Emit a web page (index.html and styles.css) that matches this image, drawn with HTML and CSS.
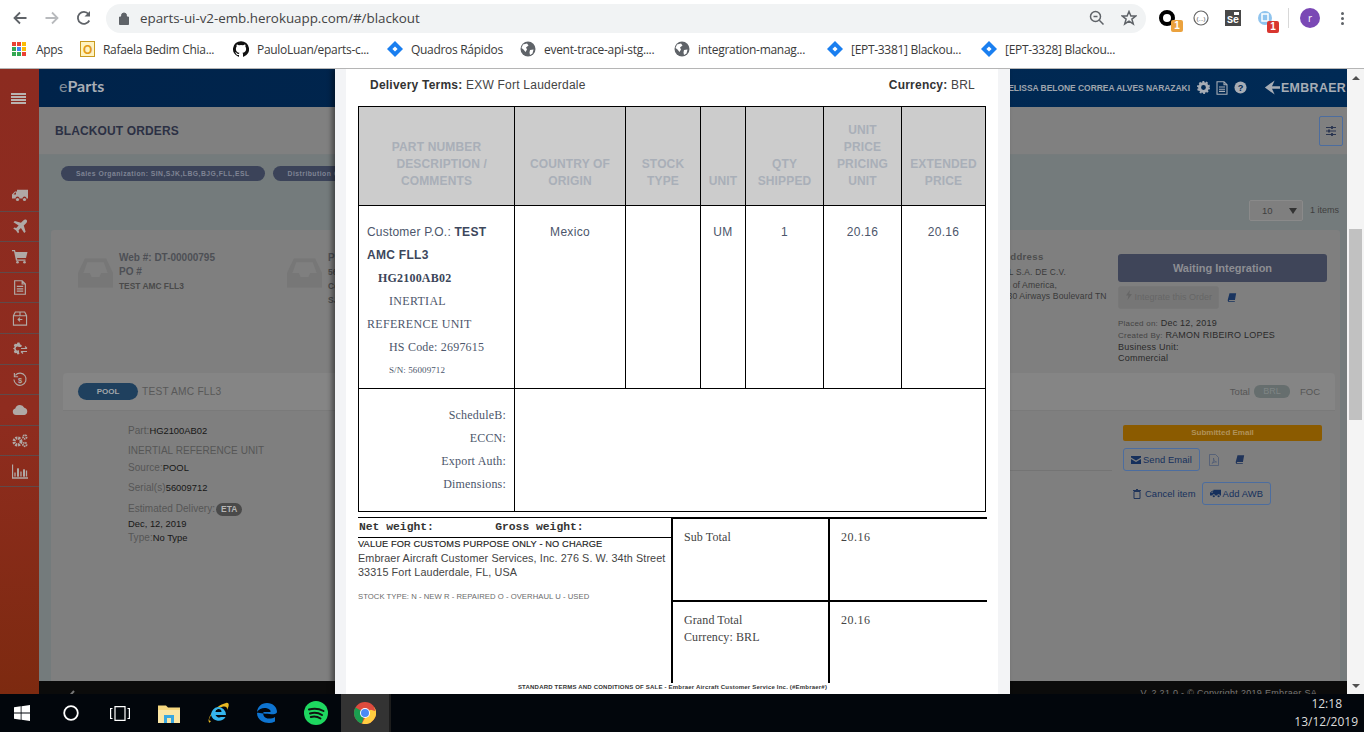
FILE: index.html
```html
<!DOCTYPE html>
<html lang="en">
<head>
<meta charset="utf-8">
<title>eParts - Blackout Orders</title>
<link rel="stylesheet" href="styles.css">
</head>
<body>
<svg class="defs" width="0" height="0" aria-hidden="true">
  <symbol id="jira" viewBox="0 0 16 16"><path d="M8 0 16 8 8 16 0 8Z" fill="#1a7ff0"/><path d="M8 5.4 10.6 8 8 10.6 5.400 8Z" fill="#fff"/></symbol>
  <symbol id="globe" viewBox="0 0 16 16"><circle cx="8" cy="8" r="7.500" fill="#5f6368"/><path d="M3 3.500 7 2.500 8.500 4.500 6 6.500 7 8.500 5.500 11 3.500 8.500 1.500 7ZM10 9 13.500 8.500 12.500 12.500 10 14 9.500 11.500Z" fill="#fff"/></symbol>
  <symbol id="book" viewBox="0 0 12 12"><path d="M3 1H11L9.500 9H2.800C2.200 9 2 10.500 2.800 10.500H9.500L9.300 11.500H2.500C1 11.500.7 10 1 8.500Z" fill="currentColor"/></symbol>
  <symbol id="doc" viewBox="0 0 12 14"><path d="M1 .7H8L11 3.700V13.300H1Z M8 .7V3.700H11 M3 6H9M3 8.200H9M3 10.400H9" fill="none" stroke="currentColor" stroke-width="1.100"/></symbol>
  <symbol id="truck" viewBox="0 0 16 12"><path d="M5 0H16V9H14.500A2 2 0 0 0 10.500 9H7.500A2 2 0 0 0 3.500 9H0V5L3 2H5ZM1.500 5H4V3H3.200Z" fill="currentColor" fill-rule="evenodd"/><circle cx="5.500" cy="10" r="1.600" fill="currentColor"/><circle cx="12.500" cy="10" r="1.600" fill="currentColor"/></symbol>
  <symbol id="inbox" viewBox="0 0 36 30"><path d="M7 0H29L36 15V30H0V15ZM9.500 4 5.500 15H12L14 19H22L24 15H30.500L26.500 4Z" fill="currentColor" fill-rule="evenodd"/></symbol>
</svg>

<header class="chrome">
  <div class="toolbar">
    <div class="nav">
      <svg class="ic16" viewBox="0 0 16 16"><path d="M14.500 8H2.500M8 2.500 2.500 8 8 13.500" fill="none" stroke="#5f6368" stroke-width="1.800"/></svg>
      <svg class="ic16" viewBox="0 0 16 16"><path d="M1.500 8H13.500M8 2.500 13.500 8 8 13.500" fill="none" stroke="#b8babd" stroke-width="1.800"/></svg>
      <svg class="ic16" viewBox="0 0 16 16"><path d="M13.300 10.500A6 6 0 1 1 12.500 4" fill="none" stroke="#5f6368" stroke-width="1.800"/><path d="M14 1V6.500H8.500Z" fill="#5f6368"/></svg>
    </div>
    <div class="omnibox">
      <svg class="lock" viewBox="0 0 10 13"><path d="M2.500 5V3.500a2.500 2.500 0 0 1 5 0V5M0.500 5H9.500V12.500H.5Z" fill="#5f6368" stroke="#5f6368"/></svg>
      <span class="url">eparts-ui-v2-emb.herokuapp.com/#/blackout</span>
      <svg class="omni-a ic16" viewBox="0 0 16 16"><circle cx="6.500" cy="6.500" r="5" fill="none" stroke="#5f6368" stroke-width="1.500"/><path d="M4.500 6.500H8.500M10.300 10.300 14.500 14.500" stroke="#5f6368" stroke-width="1.500"/></svg>
      <svg class="omni-b ic16" viewBox="0 0 16 16"><path d="M8 1.500 9.900 6H14.800L10.900 9.100 12.300 14 8 11.200 3.700 14 5.100 9.100 1.200 6H6.100Z" fill="none" stroke="#5f6368" stroke-width="1.500"/></svg>
    </div>
    <div class="exts">
      <span class="ext"><svg class="ic16" viewBox="0 0 16 16"><circle cx="8" cy="8" r="6" fill="none" stroke="#000" stroke-width="4"/></svg><b class="badge orange">1</b></span>
      <span class="ext"><svg class="ic16" viewBox="0 0 16 16"><circle cx="8" cy="8" r="7" fill="none" stroke="#666" stroke-width="1.200"/><text x="8" y="10.500" class="ext-t">(...)</text></svg></span>
      <span class="se"><i class="se-dot"></i>Se</span>
      <span class="ext"><svg class="ic16" viewBox="0 0 16 16"><circle cx="8" cy="8" r="7" fill="#8fc4ee"/><path d="M5 4H11V11H5Z" fill="none" stroke="#fff" stroke-width="1.500"/></svg><b class="badge red">1</b></span>
      <i class="divider"></i>
      <span class="avatar">r</span>
      <span class="dots"><i></i><i></i><i></i></span>
    </div>
  </div>
  <nav class="bookmarks">
    <span class="bm bm-apps"><span class="apps-grid"><i class="c1"></i><i class="c2"></i><i class="c3"></i><i class="c4"></i><i class="c5"></i><i class="c6"></i><i class="c7"></i><i class="c8"></i><i class="c9"></i></span>Apps</span>
    <span class="bm bm-rafaela"><svg class="ic15" viewBox="0 0 15 16"><rect x=".5" y=".5" width="14" height="15" fill="#fff3c0" stroke="#c99a1e"/><text x="7.500" y="12.500" class="outlook-t">O</text></svg>Rafaela Bedim Chia...</span>
    <span class="bm bm-gh"><svg class="ic16" viewBox="0 0 16 16"><path d="M8 .2a8 8 0 0 0-2.500 15.600c.4.100.5-.2.500-.4v-1.400c-2.200.5-2.700-1-2.700-1-.4-.9-.9-1.200-.9-1.200-.7-.5.100-.5.100-.5.800.100 1.200.8 1.200.8.700 1.200 1.900.9 2.300.7.100-.5.300-.9.500-1.100-1.800-.2-3.600-.9-3.600-4 0-.9.300-1.600.8-2.100-.1-.2-.4-1 .1-2.100 0 0 .7-.2 2.200.8a7.600 7.600 0 0 1 4 0c1.500-1 2.200-.8 2.200-.8.500 1.100.2 1.900.1 2.100.5.600.8 1.300.8 2.100 0 3.100-1.900 3.800-3.700 4 .3.300.6.800.6 1.500v2.200c0 .2.100.5.600.4A8 8 0 0 0 8 .2Z" fill="#111"/></svg>PauloLuan/eparts-c...</span>
    <span class="bm bm-q"><svg class="ic16"><use href="#jira"/></svg>Quadros Rápidos</span>
    <span class="bm bm-e"><svg class="ic16"><use href="#globe"/></svg>event-trace-api-stg....</span>
    <span class="bm bm-i"><svg class="ic16"><use href="#globe"/></svg>integration-manag...</span>
    <span class="bm bm-j1"><svg class="ic16"><use href="#jira"/></svg>[EPT-3381] Blackou...</span>
    <span class="bm"><svg class="ic16"><use href="#jira"/></svg>[EPT-3328] Blackou...</span>
  </nav>
</header>

<div class="viewport">
  <aside class="sidebar">
    <div class="burger"><i></i><i></i><i></i><i></i></div>
    <ul class="side-menu">
      <li><svg class="si" viewBox="0 0 16 12"><use href="#truck"/></svg></li>
      <li><svg class="si" viewBox="0 0 16 16"><path d="M15 1C14 0 12.500.5 11.500 1.500L9 4 2.500 2 1 3.500 6.500 7 4 9.500 2 9 .8 10.200 3.800 12.200 5.800 15.200 7 14 6.500 12 9 9.500 12.500 15 14 13.500 12 7 14.500 4.500C15.500 3.500 16 2 15 1Z" fill="currentColor"/></svg></li>
      <li><svg class="si" viewBox="0 0 16 14"><path d="M0 .5H3L3.500 2.500H15.500L14 8.500H5L5.300 10H13.500V11.300H4L2 1.800H0Z" fill="currentColor"/><circle cx="5.500" cy="12.700" r="1.300" fill="currentColor"/><circle cx="12.500" cy="12.700" r="1.300" fill="currentColor"/></svg></li>
      <li><svg class="si si-doc" viewBox="0 0 12 14"><use href="#doc"/></svg></li>
      <li><svg class="si" viewBox="0 0 16 16"><path d="M3 1H13L15 5V15H1V5ZM1 5H15M8 1V5M10.500 9H6M8 7 6 9 8 11" fill="none" stroke="currentColor" stroke-width="1.200"/></svg></li>
      <li><svg class="si" viewBox="0 0 16 14"><path d="M5.500 1 7.500 1 8 2.800 9.800 3.800 9.300 5.500H7A2 2 0 1 0 7 8.500V10.800L7.500 12.500 5.500 13 4.800 11.500 2.800 11.700 1.800 10 2.800 8.500 1 7 2.800 5.500 1.800 4 2.800 2.300 4.800 2.500Z" fill="currentColor"/><path d="M9 7H15M13 5 15 7M15 10H9M11 12 9 10" fill="none" stroke="currentColor" stroke-width="1.200"/></svg></li>
      <li><svg class="si" viewBox="0 0 16 16"><path d="M3 3.500A6.500 6.500 0 1 1 1.500 8" fill="none" stroke="currentColor" stroke-width="1.200"/><path d="M2 1V5H6" fill="none" stroke="currentColor" stroke-width="1.200"/><text x="8" y="11.500" class="dollar-t">$</text></svg></li>
      <li><svg class="si" viewBox="0 0 16 11"><path d="M4 11A3.300 3.300 0 0 1 3.300 4.500 4.800 4.800 0 0 1 12.300 3.800 3.700 3.700 0 0 1 12.500 11Z" fill="currentColor"/></svg></li>
      <li><svg class="si" viewBox="0 0 16 14"><circle cx="5.500" cy="8" r="3.500" fill="none" stroke="currentColor" stroke-width="3" stroke-dasharray="2 .8"/><circle cx="12.800" cy="3.500" r="1.800" fill="none" stroke="currentColor" stroke-width="1.800" stroke-dasharray="1.400 .6"/><circle cx="12.800" cy="11" r="1.800" fill="none" stroke="currentColor" stroke-width="1.800" stroke-dasharray="1.400 .6"/></svg></li>
      <li><svg class="si" viewBox="0 0 16 14"><path d="M.5 0V13.500H16M3 8V12M6 4V12M9 7V12M12 5V12M14.500 6V12" fill="none" stroke="currentColor" stroke-width="1.300"/><path d="M6 4V12M12 5V12" stroke="currentColor" stroke-width="2"/></svg></li>
    </ul>
  </aside>

  <main class="app">
    <div class="app-header">
      <span class="logo"><span class="logo-e">e</span>Parts</span>
      <div class="user">
        <span class="user-name">MELISSA BELONE CORREA ALVES NARAZAKI</span>
        <svg class="hi" viewBox="0 0 14 14"><circle cx="7" cy="7" r="4.200" fill="none" stroke="#a7adb5" stroke-width="3.200"/><circle cx="7" cy="7" r="6" fill="none" stroke="#a7adb5" stroke-width="2" stroke-dasharray="2 1.770"/></svg>
        <svg class="hi hi-doc" viewBox="0 0 12 14"><use href="#doc"/></svg>
        <svg class="hi" viewBox="0 0 14 14"><circle cx="7" cy="7" r="6.500" fill="#a7adb5"/><text x="7" y="10.500" class="q-t">?</text></svg>
        <svg class="emb-arrow" viewBox="0 0 18 16"><path d="M12 0 1 8 12 16 9 9.500H18V6.500H9Z" fill="#a7adb5"/></svg>
        <span class="emb">EMBRAER</span>
      </div>
    </div>
    <div class="title-bar">
      <h1>BLACKOUT ORDERS</h1>
      <button class="filter-btn"><svg viewBox="0 0 12 12" width="12" height="12"><path d="M1 2.500H11M1 6H11M1 9.500H11" stroke="#2a3550" stroke-width="1.100"/><path d="M7 1V4M4 4.500V7.500M7 8V11" stroke="#2a3550" stroke-width="1.800"/></svg></button>
    </div>
    <div class="chips">
      <span class="chip">Sales Organization: SIN,SJK,LBG,BJG,FLL,ESL</span>
      <span class="chip">Distribution Channel: 10,20</span>
    </div>
    <div class="pager">
      <span class="select">10<i class="caret"></i></span>
      <span class="items">1 items</span>
    </div>
    <section class="card">
      <div class="order-top">
        <div class="order-col">
          <svg class="inbox"><use href="#inbox"/></svg>
          <div>
            <p class="o-h">Web #: DT-00000795</p>
            <p class="o-h">PO #</p>
            <p class="o-s">TEST AMC FLL3</p>
          </div>
        </div>
        <div class="order-col">
          <svg class="inbox"><use href="#inbox"/></svg>
          <div>
            <p class="o-h">Parts</p>
            <p class="o-s">56009712</p>
            <p class="o-s">Commercial</p>
            <p class="o-s">SJK</p>
          </div>
        </div>
        <div class="address">
          <p class="addr-h">Shipping Address</p>
          <p class="addr-a">AEROLITORAL S.A. DE C.V.</p>
          <p class="addr-b">United States of America,</p>
          <p class="addr-b">Memphis, 2630 Airways Boulevard TN</p>
        </div>
        <div class="status">
          <div class="waiting">Waiting Integration</div>
          <div class="status-actions">
            <span class="integrate">
              <svg viewBox="0 0 6 10" width="6" height="10"><path d="M4 0 0 5.500H2.500L1.500 10 6 4H3.300Z" fill="#666"/></svg>
              Integrate this Order
            </span>
            <svg class="book"><use href="#book"/></svg>
          </div>
          <p class="meta"><span class="meta-l">Placed on:</span> Dec 12, 2019</p>
          <p class="meta"><span class="meta-l">Created By:</span> RAMON RIBEIRO LOPES</p>
          <p class="meta">Business Unit:</p>
          <p class="meta">Commercial</p>
        </div>
      </div>
      <div class="item-head">
        <span class="pool">POOL</span>
        <span class="item-ref">TEST AMC FLL3</span>
        <span class="totals">Total <span class="brl">BRL</span> <span class="foc">FOC</span></span>
      </div>
      <div class="item-body">
        <dl class="item-info">
          <div class="l1"><span>Part:</span><b>HG2100AB02</b></div>
          <div class="l2"><span>INERTIAL REFERENCE UNIT</span></div>
          <div class="l3"><span>Source:</span><b>POOL</b></div>
          <div class="l4"><span>Serial(s)</span><b>56009712</b></div>
          <div class="l5"><span>Estimated Delivery:</span><em class="eta">ETA</em></div>
          <div class="l6"><b>Dec, 12, 2019</b></div>
          <div class="l7"><span>Type:</span><b>No Type</b></div>
        </dl>
        <div class="item-rule"></div>
        <div class="item-actions">
          <div class="submitted">Submitted Email</div>
          <div class="act-row">
            <span class="btn"><svg viewBox="0 0 10 8" width="10" height="8"><path d="M0 0H10V1.500L5 4.500 0 1.500ZM0 3 5 6 10 3V8H0Z" fill="#16305c"/></svg> Send Email</span>
            <svg class="pdf" viewBox="0 0 10 12"><path d="M.5.500H6.500L9.500 3.500V11.500H.5ZM3 9.500C4.500 8 5 5.500 4.500 4 4 5.500 6 8 7.500 8 6 7.500 4 8.500 3 9.500Z" fill="none" stroke="#4d5a76" stroke-width=".8"/></svg>
            <svg class="book book2"><use href="#book"/></svg>
          </div>
          <div class="act-row act-row2">
            <span class="cancel"><svg viewBox="0 0 8 10" width="8" height="10"><path d="M1 2.500H7V9.500H1ZM0 1.500H8M3 .5H5" fill="none" stroke="#20355a"/></svg> Cancel item</span>
            <span class="btn btn-awb"><svg viewBox="0 0 16 12" width="11" height="9"><use href="#truck"/></svg> Add AWB</span>
          </div>
        </div>
      </div>
    </section>
    <footer class="app-foot">
      <svg class="foot-chev" viewBox="0 0 12 12" width="12" height="12"><path d="M2 12 10 3" stroke="#777" stroke-width="2"/></svg>
      <span class="foot-txt">V. 2.21.0 - © Copyright 2019 Embraer SA</span>
    </footer>
  </main>

  <div class="scrollbar">
    <i class="arrow-up"></i>
    <i class="thumb"></i>
    <i class="arrow-down"></i>
  </div>

  <div class="modal">
    <div class="sheet">
      <div class="terms">
        <span><b>Delivery Terms:</b> EXW Fort Lauderdale</span>
        <span><b>Currency:</b> BRL</span>
      </div>
      <table class="inv">
        <colgroup><col class="c-a"><col class="c-b"><col class="c-c"><col class="c-d"><col class="c-e"><col class="c-f"><col class="c-g"></colgroup>
        <thead>
          <tr>
            <th>PART NUMBER<br>&nbsp;&nbsp;&nbsp;DESCRIPTION /<br>COMMENTS</th>
            <th>COUNTRY OF<br>ORIGIN</th>
            <th>STOCK<br>TYPE</th>
            <th>UNIT</th>
            <th>QTY<br>SHIPPED</th>
            <th>UNIT<br>PRICE<br>PRICING<br>UNIT</th>
            <th>EXTENDED<br>PRICE</th>
          </tr>
        </thead>
        <tbody>
          <tr class="row-main">
            <td class="desc">
              <div class="d-sans">Customer P.O.: <b>TEST AMC FLL3</b></div>
              <div class="d-serif d-part"><b>HG2100AB02</b></div>
              <div class="d-serif d-wrap">INERTIAL REFERENCE UNIT</div>
              <div class="d-serif d-ind">HS Code: 2697615</div>
              <div class="d-serif d-ind d-sn">S/N: 56009712</div>
            </td>
            <td>Mexico</td>
            <td></td>
            <td>UM</td>
            <td>1</td>
            <td>20.16</td>
            <td>20.16</td>
          </tr>
          <tr class="row-extra">
            <td class="export">ScheduleB:<br>ECCN:<br>Export Auth:<br>Dimensions:</td>
            <td colspan="6"></td>
          </tr>
        </tbody>
      </table>
      <div class="summary">
        <div class="sum-left">
          <div class="weights">Net weight:         Gross weight:</div>
          <p class="value">VALUE FOR CUSTOMS PURPOSE ONLY - NO CHARGE</p>
          <p class="addr">Embraer Aircraft Customer Services, Inc. 276 S. W. 34th Street 33315 Fort Lauderdale, FL, USA</p>
          <p class="stock">STOCK TYPE: N - NEW R - REPAIRED O - OVERHAUL U - USED</p>
        </div>
        <div class="sum-right">
          <div class="s-cell">Sub Total</div><div class="s-cell s-val">20.16</div>
          <div class="s-cell">Grand Total<br>Currency: BRL</div><div class="s-cell s-val">20.16</div>
        </div>
      </div>
      <p class="standard">STANDARD TERMS AND CONDITIONS OF SALE - Embraer Aircraft Customer Service Inc. (#Embraer#)</p>
    </div>
  </div>
</div>

<footer class="taskbar">
  <span class="tb tb-win"><svg viewBox="0 0 16 16" width="16" height="16"><path d="M0 2.300 6.700 1.300V7.600H0ZM7.500 1.200 16 0V7.600H7.500ZM0 8.400H6.700V14.700L0 13.700ZM7.500 8.400H16V16L7.500 14.800Z" fill="#fff"/></svg></span>
  <span class="tb"><svg viewBox="0 0 16 16" width="16" height="16"><circle cx="8" cy="8" r="6.800" fill="none" stroke="#fff" stroke-width="1.800"/></svg></span>
  <span class="tb"><svg viewBox="0 0 20 15" width="20" height="15"><path d="M5 .7H15V14.300H5ZM2.500 2.500H.6V12.500H2.500M17.500 2.500H19.400V12.500H17.500" fill="none" stroke="#fff" stroke-width="1.200"/></svg></span>
  <span class="tb"><svg viewBox="0 0 22 19" width="22" height="19"><path d="M0 1.500H8L10 3.500H22V19H0Z" fill="#f6d77f"/><path d="M0 6H22V19H0Z" fill="#fbe6a6"/><path d="M6 19V11H16V19H13V14H9V19Z" fill="#3aa7e0"/></svg></span>
  <span class="tb"><svg viewBox="0 0 24 24" width="24" height="24"><path d="M3 21C1 18 8 5 20 2 24 1 23 6 21 9 22 3 13 5 6 13 3 17 2 20 5 20 3 23 3 21 3 21Z" fill="#e8b923"/><path d="M12 6A8 8 0 0 0 5 14 8 8 0 0 0 19.500 16H15A4 4 0 0 1 9.500 14H20A8 8 0 0 0 12 6ZM9.500 11A3 3 0 0 1 15.500 11Z" fill="#34b5ee" fill-rule="evenodd"/></svg></span>
  <span class="tb"><svg viewBox="0 0 20 20" width="20" height="20"><path d="M10 0C4 0 .5 4 0 9 2 5.500 6 4.500 9 5 12.500 5.500 14 7.500 13.500 9H6.500C5.500 13 8 15.500 12 15.500 14.500 15.500 16.500 15 18 14V18.500C16 19.500 14 20 12 20 7 20 0 17 0 10 0 9 20 14 20 9 20 4 16 0 10 0Z" fill="#0e74d1"/></svg></span>
  <span class="tb"><svg viewBox="0 0 24 24" width="24" height="24"><circle cx="12" cy="12" r="12" fill="#1ed760"/><path d="M5 8.500C10 7 15 7.500 19.500 10M6 12.500C10 11.300 14.500 11.800 18 14M6.800 16C10 15.200 13.500 15.500 16.500 17.500" fill="none" stroke="#111" stroke-width="2" stroke-linecap="round"/></svg></span>
  <span class="tb tb-active"><svg viewBox="0 0 22 22" width="22" height="22"><circle cx="11" cy="11" r="11" fill="#dd4b3e"/><path d="M11 11 1.500 5.500A11 11 0 0 0 8 21.600Z" fill="#1a9e50"/><path d="M11 11 20.500 5.500A11 11 0 0 1 8 21.600L11 16Z" fill="#ffcd40"/><path d="M11 6H20.500A11 11 0 0 1 21 9Z" fill="#dd4b3e"/><circle cx="11" cy="11" r="5" fill="#fff"/><circle cx="11" cy="11" r="4" fill="#4a8af5"/></svg></span>
  <i class="tb-sep"></i>
  <div class="clock"><span>12:18</span><span>13/12/2019</span></div>
</footer>
</body>
</html>
```
FILE: styles.css
```css
* { box-sizing: border-box; }
html, body { margin: 0; padding: 0; }
body {
  width: 1364px; height: 732px; overflow: hidden;
  display: flex; flex-direction: column;
  font-family: "Liberation Sans", Arial, sans-serif;
  background: #fff;
}
p, h1, ul, dl { margin: 0; padding: 0; }
.defs { position: absolute; }
.ic16 { width: 16px; height: 16px; flex: none; }
.ic15 { width: 15px; height: 16px; flex: none; }

/* browser chrome */
.chrome { height: 69px; flex: none; background: #fff; border-bottom: 1px solid #b5b5b5; }
.toolbar { height: 36px; display: flex; align-items: center; }
.nav { width: 106px; display: flex; gap: 16px; padding-left: 12px; }
.omnibox {
  width: 1040px; height: 29px; border-radius: 15px; background: #f1f3f4;
  display: flex; align-items: center; padding-left: 13px;
}
.lock { width: 10px; height: 13px; margin-right: 11px; }
.url { font-family: "Open Sans", sans-serif; font-size: 13.4px; color: #444; letter-spacing: -.03px; flex: 1; }
.omni-a { margin-right: 16px; }
.omni-b { margin-right: 9px; }
.exts { display: flex; align-items: center; flex: 1; padding-left: 13px; }
.ext { position: relative; width: 34px; display: flex; align-items: center; height: 20px; }
.ext-t { font: 6px "Liberation Sans"; text-anchor: middle; fill: #444; }
.badge {
  position: absolute; left: 12px; top: 12px; min-width: 12px; height: 12px;
  font: bold 10px/12px "Liberation Sans"; color: #fff; text-align: center; border-radius: 2px;
}
.orange { background: #eba23e; }
.red { background: #d8362f; left: 10px; top: 13px; }
.se {
  position: relative; display: block; flex: none;
  font: bold 10px/11px "Liberation Mono", monospace; color: #fff; background: #484848;
  width: 16px; height: 16px; margin: 0 16px 0 -2px; padding: 5px 0 0 2px;
}
.se-dot { position: absolute; top: 2px; right: 2px; width: 5px; height: 3px; background: #fff; }
.divider { width: 1px; height: 20px; background: #d8d8d8; margin: 0 11px 0 -3px; flex: none; }
.avatar {
  width: 20px; height: 20px; border-radius: 50%; background: #7a48b5; color: #fff;
  font: 10px/20px "Open Sans", sans-serif; text-align: center; margin-right: 21px; flex: none;
}
.dots { display: flex; flex-direction: column; gap: 2px; }
.dots i { width: 3px; height: 3px; border-radius: 50%; background: #5f6368; display: block; }

.bookmarks { height: 32px; display: flex; align-items: center; padding: 0 0 6px 12px; }
.bm {
  display: flex; align-items: center; gap: 8px; font: 12px "Open Sans", sans-serif; color: #3a3a3a;
  letter-spacing: -.3px; white-space: nowrap; height: 17px;
}
.bm-apps { width: 68px; gap: 10px; }
.bm-rafaela { width: 153px; }
.bm-gh { width: 154px; }
.bm-q { width: 133px; }
.bm-e { width: 154px; }
.bm-i { width: 153px; }
.bm-j1 { width: 154px; }
.apps-grid { display: grid; grid-template-columns: repeat(3, 4px); gap: 1px; }
.apps-grid i { width: 4px; height: 4px; display: block; }
.c1 { background: #ea4335; } .c2 { background: #ea4335; } .c3 { background: #fbbc05; }
.c4 { background: #34a853; } .c5 { background: #4285f4; } .c6 { background: #fbbc05; }
.c7 { background: #34a853; } .c8 { background: #34a853; } .c9 { background: #ea4335; }
.outlook-t { font: bold 12px "Liberation Sans"; text-anchor: middle; fill: #e39a16; }

/* page */
.viewport { position: relative; flex: 1; display: flex; min-height: 0; overflow: hidden; }
.sidebar {
  width: 39px; flex: none;
  background: linear-gradient(#8c2b20, #8f2c1f 55%, #7d2a10);
}
.burger { height: 112px; padding: 24px 0 0 11px; display: flex; flex-direction: column; gap: 1px; }
.burger i { width: 15px; height: 2px; background: #b9b3b0; display: block; }
.side-menu { list-style: none; color: #b0a9a6; }
.side-menu li {
  height: 30.6px; display: flex; align-items: center; justify-content: center;
  border-bottom: 1px solid #5f4a4a;
}
.si { width: 16px; height: 15px; }
.si-doc { height: 15px; }
.dollar-t { font: bold 8px "Liberation Sans"; text-anchor: middle; fill: currentColor; }

.app { flex: 1; min-width: 0; display: flex; flex-direction: column; background: #747b7c; overflow: hidden; }
.app-header {
  height: 38px; flex: none; display: flex; align-items: center; justify-content: space-between;
  background: linear-gradient(90deg, #00234a, #002a55); padding: 0 0 1px 20px; overflow: hidden;
}
.logo { font: bold 16px/20px "Lato", sans-serif; color: #a8adb5; margin-top: -3px; }
.logo-e { color: #7f8b98; font-weight: 400; }
.user { display: flex; align-items: center; width: 400px; flex: none; margin-right: -55px; }
.user-name { font: bold 8.5px "Liberation Sans"; color: #9ea4ad; white-space: nowrap; letter-spacing: -.05px; width: 188px; text-align: right; flex: none; margin-right: 7px; direction: rtl; }
.hi { width: 13px; height: 13px; margin-right: 6px; flex: none; color: #a7adb5; }
.hi-doc { width: 12px; height: 14px; }
.q-t { font: bold 10px "Liberation Sans"; text-anchor: middle; fill: #00264f; }
.emb-arrow { width: 16px; height: 15px; margin-left: 11px; flex: none; }
.emb { font: bold 12.4px "Liberation Sans"; color: #a7adb5; margin-left: 1px; letter-spacing: .35px; white-space: nowrap; }

.title-bar {
  height: 48px; flex: none; background: #808080; border-bottom: 1px solid #767b7c;
  display: flex; align-items: center; justify-content: space-between; padding: 0 4px 0 16px;
}
h1 { font-size: 12px; font-weight: 700; color: #2c3044; letter-spacing: .12px; }
.filter-btn { width: 24px; height: 30px; border: 1px solid #4c6d9f; border-radius: 2px; background: transparent; padding: 0; display: flex; align-items: center; justify-content: center; }

.chips { height: 38px; flex: none; padding: 11px 0 0 22px; display: flex; gap: 8px; }
.chip {
  height: 15px; border-radius: 8px; background: #3b4359; color: #7f8494;
  font: bold 6.8px/15px "Liberation Sans"; padding: 0 15px; letter-spacing: .47px; white-space: nowrap;
}
.pager { height: 37px; flex: none; display: flex; align-items: flex-start; justify-content: flex-end; padding: 7px 8px 0 0; }
.select {
  width: 54px; height: 21px; border: 1px solid #8a8a8a; border-radius: 2px; background: #7f7f7f;
  font: 9.5px/19px "Liberation Sans"; color: #3f3f3f; padding-left: 12px; position: relative; margin-right: 7px;
}
.caret { position: absolute; right: 5px; top: 7px; border: 4px solid transparent; border-top: 6px solid #333; }
.items { font: 9px/21px "Liberation Sans"; color: #3f3f3f; }

.card { flex: 1; min-height: 0; margin: 0 7px 0 12px; background: #7f7f7f; border-top-left-radius: 3px; border-top-right-radius: 3px; }
.order-top {
  height: 143px; display: grid; grid-template-columns: 209px 209px 1fr 209px;
  padding: 21px 13px 0 27px;
}
.order-col { display: flex; gap: 6px; }
.inbox { width: 35px; height: 30px; margin-top: 7px; color: #777; flex: none; }
.o-h { font: bold 10px/14px "Liberation Sans"; color: #4d4f55; white-space: nowrap; }
.o-s { font: bold 8.4px/14px "Liberation Sans"; color: #4a4a4a; }
.address { justify-self: end; width: 149px; margin-right: 12px; }
.addr-h { font: bold 9.6px/14px "Liberation Sans"; color: #4d4d4d; white-space: nowrap; letter-spacing: .3px; margin: -1px 0 1px; }
.addr-a { font: 8.3px/15px "Liberation Sans"; color: #3a3a3a; white-space: nowrap; letter-spacing: .25px; margin-left: -4px; }
.addr-b { font: 8.6px/11px "Liberation Sans"; color: #3a3a3a; white-space: nowrap; letter-spacing: .12px; }
.status { padding-top: 3px; }
.waiting {
  height: 28px; border-radius: 3px; background: #3f4559; color: #8d8e93;
  font: bold 11px/28px "Liberation Sans"; text-align: center;
}
.status-actions { display: flex; align-items: center; margin: 4px 0 9px; }
.integrate {
  width: 101px; height: 23px; border: 1px solid #787878; border-radius: 3px; background: #767676; color: #666;
  font: 9px/21px "Liberation Sans"; padding-left: 7px; white-space: nowrap;
}
.book { width: 10px; height: 11px; margin-left: 8px; color: #19345f; }
.meta { font: 9px/11.8px "Liberation Sans"; color: #2a2a2a; white-space: nowrap; letter-spacing: .22px; }
.meta-l { font-size: 8px; color: #444; }

.item-head {
  height: 38px; margin: 0 5px 0 12px; background: #858585; border-bottom: 1px solid #7a7a7a;
  border-radius: 4px 4px 0 0;
  display: flex; align-items: center; padding: 0 15px;
}
.pool {
  width: 60px; height: 17px; border-radius: 9px; background: #1f405e; color: #a3a6aa;
  font: bold 8px/17px "Liberation Sans"; text-align: center; margin-right: 4px;
}
.item-ref { font: 10.2px "Liberation Sans"; color: #585858; letter-spacing: .2px; }
.totals { margin-left: auto; font: 9.5px/14px "Liberation Sans"; color: #555; display: flex; align-items: center; }
.brl {
  width: 36px; height: 13px; border-radius: 6px; background: #666e6e; color: #7f8585;
  font: 9px/13px "Liberation Sans"; text-align: center; margin: 0 10px 0 4px;
}
.foc { color: #555; }

.item-body { display: flex; padding: 13px 0 0 77px; }
.item-info { width: 882px; flex: none; font-size: 10px; color: #565656; letter-spacing: .05px; }
.item-info b { font-weight: 400; font-size: 9.4px; color: #171717; letter-spacing: 0; }
.item-info div { white-space: nowrap; }
.l1 { height: 20px; line-height: 14px; }
.l2 { height: 17px; line-height: 14px; }
.l3 { height: 20px; line-height: 14px; }
.l4 { height: 21px; line-height: 14px; }
.l5 { height: 15px; line-height: 14px; }
.l6 { height: 14px; line-height: 14px; }
.l7 { height: 14px; line-height: 14px; }
.eta {
  display: inline-block; height: 13px; padding: 0 5px; border-radius: 7px; background: #4a4a4a; color: #b5b5b5;
  font: bold 8.4px/13px "Liberation Sans"; margin-left: 1px;
}
.item-rule { width: 102px; height: 1px; background: #747474; margin: 46px 11px 0 0; flex: none; }
.item-actions { width: 199px; flex: none; font-size: 9.5px; }
.submitted {
  height: 16px; background: #8b5b00; border-radius: 2px; color: #b0925a; margin-top: 1px;
  font: bold 8px/16px "Liberation Sans"; text-align: center;
}
.act-row { display: flex; align-items: center; margin-top: 7px; }
.btn {
  height: 23px; border: 1px solid #4c6d9f; border-radius: 3px; color: #16305c;
  font: 9.400px/21px "Liberation Sans"; display: inline-flex; align-items: center; gap: 2px; padding: 0 7px; white-space: nowrap; letter-spacing: .1px;
}
.pdf { width: 10px; height: 12px; margin-left: 9px; }
.book2 { margin-left: 16px; color: #20345a; }
.act-row2 { margin-top: 11px; padding-left: 10px; }
.cancel { font: 9.4px "Liberation Sans"; color: #16305c; display: inline-flex; gap: 4px; align-items: center; letter-spacing: .1px; margin-right: 6px; white-space: nowrap; }

.app-foot {
  height: 13px; flex: none; background: #0b0b0b; overflow: hidden;
  display: flex; justify-content: space-between; padding: 0 30px 0 25px;
}
.foot-chev { margin-top: 7px; }
.foot-txt { font: 9px/24px "Liberation Sans"; color: #777; white-space: nowrap; letter-spacing: .3px; }

/* scrollbar */
.scrollbar { width: 17px; flex: none; position: relative; background: #f4f4f4; }
.thumb { position: absolute; top: 160px; left: 2px; width: 13px; height: 191px; background: #c1c1c1; }
.arrow-up, .arrow-down { position: absolute; left: 5px; border: 4px solid transparent; }
.arrow-up { top: 3px; border-bottom: 4px solid #505050; }
.arrow-down { bottom: 2px; border-top: 4px solid #505050; }

/* modal */
.modal {
  position: absolute; left: 335px; top: 0; bottom: 0; width: 675px; padding: 0 12px 0 11px;
  background: #f3f4f6; box-shadow: -3px 0 5px rgba(0,0,0,.45); overflow: hidden;
}
.sheet { background: #fff; height: 100%; padding: 0 12px; overflow: hidden; }
.terms {
  height: 37px; display: flex; justify-content: space-between; align-items: flex-start;
  padding: 9px 11px 0 12px; font-size: 12px; line-height: 15px; color: #444; letter-spacing: .22px;
}
.terms b { color: #333; }
.inv { width: 627px; border-collapse: collapse; table-layout: fixed; border: 1px solid #000; }
.c-a { width: 156px; } .c-b { width: 111px; } .c-c { width: 75px; } .c-d { width: 45px; }
.c-e { width: 78px; } .c-f { width: 78px; } .c-g { width: 84px; }
.inv th {
  height: 99px; padding: 0 0 15px; background: #ccc; vertical-align: bottom;
  font: bold 12px/17px "Liberation Sans"; color: #a9afb8; letter-spacing: .15px;
  border-left: 1px solid #000; border-right: 1px solid #000;
  border-top: 1px solid #000;
}
.inv td { border: 1px solid #000; vertical-align: top; text-align: center; font-size: 12px; color: #4c566b; padding: 19px 0 0; letter-spacing: .3px; line-height: 15px; }
.row-main { height: 183px; }
.inv .desc { text-align: left; padding: 15px 6px 0 8px; letter-spacing: 0; line-height: 23px; }
.d-sans { letter-spacing: .2px; }
.d-sans b { color: #3d475c; letter-spacing: .3px; }
.d-serif { font-family: "Liberation Serif", serif; letter-spacing: .2px; }
.d-part { padding-left: 11px; color: #3b4559; }
.d-wrap { text-indent: 22px; letter-spacing: .3px; }
.d-ind { padding-left: 22px; }
.d-sn { font-size: 9px; letter-spacing: .1px; }
.row-extra { height: 123px; }
.inv .export { text-align: right; padding: 15px 8px 0 0; font-family: "Liberation Serif", serif; line-height: 23px; letter-spacing: .2px; }

.summary { display: grid; grid-template-columns: 313px 316px; margin-top: 5px; width: 629px; }
.sum-left { border-top: 1px solid #000; height: 166px; color: #333; }
.weights {
  font: bold 11.35px/19px "Liberation Mono", monospace; white-space: pre; color: #333; height: 20px;
  border-bottom: 1px solid #000; padding-left: 1px;
}
.value { font: 9.25px/13px "Liberation Sans"; color: #222; letter-spacing: .12px; -webkit-text-stroke: .15px #222; }
.addr { font: 10.8px/14px "Liberation Sans"; color: #444; letter-spacing: .1px; width: 312px; }
.stock { font: 7.7px/12px "Liberation Sans"; color: #6b6b6b; margin-top: 12px; white-space: nowrap; letter-spacing: .04px; }
.sum-right { display: grid; grid-template-columns: 157px 159px; grid-auto-rows: 81px; height: 166px; border-top: 2px solid #000; }
.s-cell { border-left: 2px solid #000; padding: 10px 0 0 11px; font: 12px/17px "Liberation Serif", serif; color: #444; letter-spacing: .1px; }
.sum-right .s-cell:nth-child(n+3) { border-top: 2px solid #000; height: 83px; }
.s-val { letter-spacing: .5px; }
.standard { font: bold 6px/8px "Liberation Sans"; color: #333; text-align: center; width: 629px; letter-spacing: .2px; white-space: nowrap; }

/* taskbar */
.taskbar { height: 38px; flex: none; background: #02060c; display: flex; align-items: center; }
.tb { width: 49.1px; height: 38px; display: flex; align-items: center; justify-content: center; flex: none; }
.tb-win { margin-left: -3px; }
.tb-active { background: #333; }
.tb-sep { width: 2px; height: 38px; background: #1c1c1c; margin-left: -1px; }
.clock { margin-left: auto; display: flex; flex-direction: column; align-items: flex-end; padding-right: 6px; font: 12px/18px "Open Sans", sans-serif; color: #ddd; }
.clock span:first-child { padding-right: 16px; }
```
